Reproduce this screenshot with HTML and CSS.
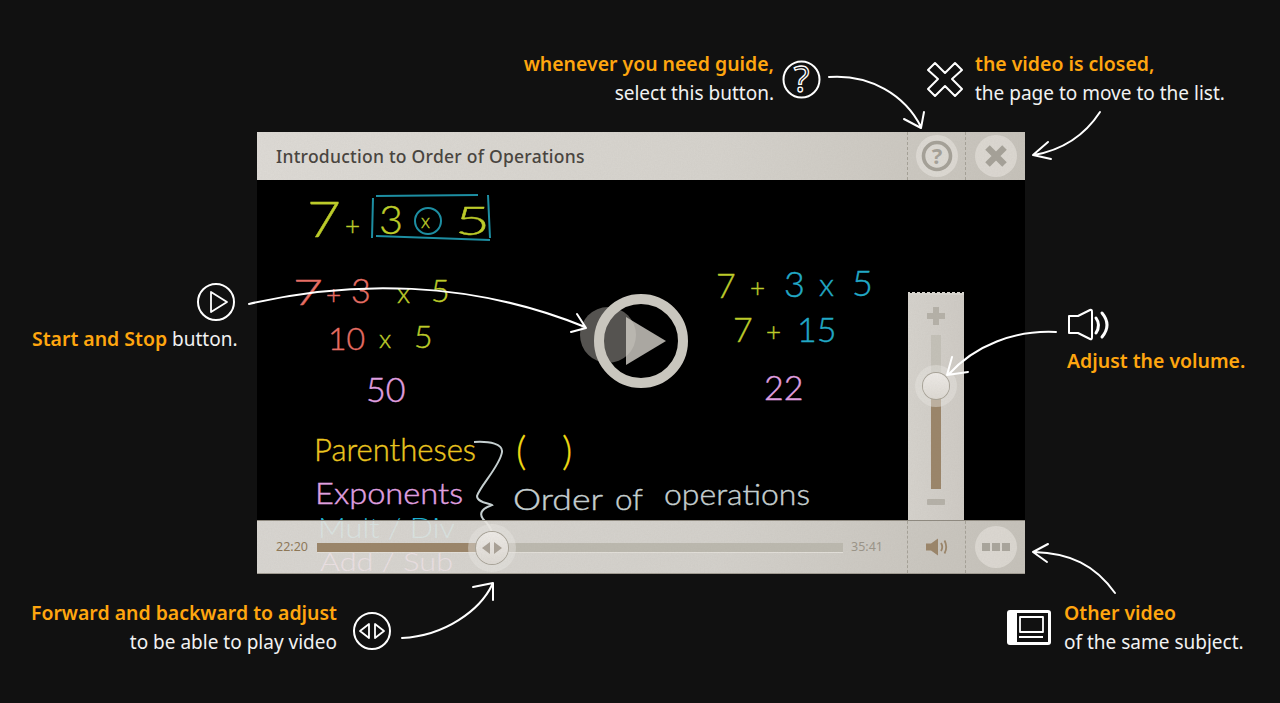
FILE: index.html
```html
<!DOCTYPE html>
<html>
    <head>
        <meta charset="utf-8">
        <title>Video player guide</title>
        <link rel="stylesheet" href="styles.css">
    </head>
    <body>
        <div class="stage">
            <section class="player">
                <header class="titlebar">
                    <h1 class="title">Introduction to Order of Operations</h1>
                    <div class="tool">
                        <span class="round">
                            <svg width="32" height="32" viewBox="0 0 32 32">
                                <circle cx="16" cy="16" r="13.5" fill="none" stroke="#a5a198" stroke-width="3.6"/>
                                <text class="help-mark" x="16" y="24" text-anchor="middle">?</text>
                            </svg>
                        </span>
                    </div>
                    <div class="tool tool-last">
                        <span class="round">
                            <svg width="24" height="24" viewBox="0 0 24 24">
                                <path d="M3.5 3.5 L20.5 20.5 M20.5 3.5 L3.5 20.5" stroke="#a5a198" stroke-width="6.4" fill="none"/>
                            </svg>
                        </span>
                    </div>
                </header>

                <div class="video">
                    <svg class="board" width="768" height="394" viewBox="257 180 768 394">
                        <g class="hand lime">
                            <text x="307" y="237" font-size="50" textLength="34" lengthAdjust="spacingAndGlyphs">7</text>
                            <text x="345" y="235" font-size="26">+</text>
                            <text x="379" y="234" font-size="40" textLength="24" lengthAdjust="spacingAndGlyphs">3</text>
                            <text x="421" y="228" font-size="19">x</text>
                            <text x="455" y="235" font-size="40" textLength="35" lengthAdjust="spacingAndGlyphs">5</text>
                        </g>
                        <g fill="none" stroke="#1d8ea2" stroke-width="2">
                            <path d="M373 198 L372 238 M376 196 L478 195 M488 195 L490 238 M376 236 L490 240"/>
                            <ellipse cx="428" cy="221" rx="13" ry="13"/>
                        </g>

                        <g class="hand salmon">
                            <text x="293" y="305" font-size="36" textLength="30" lengthAdjust="spacingAndGlyphs">7</text>
                            <text x="326" y="304" font-size="26">+</text>
                            <text x="351" y="303" font-size="34">3</text>
                            <text x="328" y="350" font-size="32">10</text>
                        </g>
                        <g class="hand lime">
                            <text x="397" y="303" font-size="28">x</text>
                            <text x="431" y="302" font-size="32">5</text>
                            <text x="379" y="348" font-size="26">x</text>
                            <text x="414" y="348" font-size="32">5</text>
                            <text x="716" y="298" font-size="34">7</text>
                            <text x="750" y="297" font-size="26">+</text>
                            <text x="733" y="342" font-size="34">7</text>
                            <text x="766" y="341" font-size="26">+</text>
                        </g>
                        <g class="hand cyan">
                            <text x="784" y="297" font-size="36">3</text>
                            <text x="819" y="296" font-size="32">x</text>
                            <text x="852" y="296" font-size="36">5</text>
                            <text x="797" y="342" font-size="34">15</text>
                        </g>
                        <g class="hand pink">
                            <text x="366" y="402" font-size="34">50</text>
                            <text x="764" y="400" font-size="34">22</text>
                            <text x="315" y="504" font-size="29" textLength="148" lengthAdjust="spacingAndGlyphs">Exponents</text>
                        </g>
                        <g class="hand gold">
                            <text x="314" y="461" font-size="32" textLength="162" lengthAdjust="spacingAndGlyphs">Parentheses</text>
                        </g>
                        <g class="hand sun">
                            <text x="516" y="465" font-size="40">(</text>
                            <text x="562" y="465" font-size="40">)</text>
                        </g>
                        <g class="hand chalk">
                            <text x="513" y="510" font-size="30" textLength="90" lengthAdjust="spacingAndGlyphs">Order</text>
                            <text x="615" y="510" font-size="30" textLength="28" lengthAdjust="spacingAndGlyphs">of</text>
                            <text x="664" y="505" font-size="30" textLength="146" lengthAdjust="spacingAndGlyphs">operations</text>
                        </g>
                        <path class="brace" d="M474 442 C490 441 503 444 502 452 C500 466 480 486 477 496 C477 503 490 503 492 505 C484 508 478 512 483 519 C490 526 494 532 491 540"/>

                        <text class="hand faded-cyan" x="318" y="538" font-size="28" textLength="137" lengthAdjust="spacingAndGlyphs">Mult / Div</text>
                        <text class="hand faded-pink" x="320" y="571" font-size="26" textLength="133" lengthAdjust="spacingAndGlyphs">Add / Sub</text>
                    </svg>

                    <button class="play-hit"></button>
                    <div class="play">
                        <svg width="40" height="48" viewBox="0 0 40 48"><path d="M0 0 L40 24 L0 48 Z" fill="#cfccc4" fill-opacity="0.82"/></svg>
                    </div>

                    <aside class="volume">
                        <svg class="vol-sign" width="18" height="18" viewBox="0 0 18 18">
                            <path d="M6 0 H12 V6 H18 V12 H12 V18 H6 V12 H0 V6 H6 Z" fill="#b5b1a8"/>
                        </svg>
                        <div class="vol-track">
                            <div class="vol-fill" style="height:67%"></div>
                            <span class="knob" style="bottom:67%"></span>
                        </div>
                        <span class="vol-minus"></span>
                    </aside>

                    <div class="controls">
                        <span class="time">22:20</span>
                        <div class="seek">
                            <div class="seek-fill" style="width:33.3%"></div>
                            <span class="knob seek-knob" style="left:33.3%">
                                <svg width="20" height="12" viewBox="0 0 20 12">
                                    <path d="M8 0 V12 L0 6 Z M12 0 V12 L20 6 Z" fill="#a9a196"/>
                                </svg>
                            </span>
                        </div>
                        <span class="time time-end">35:41</span>
                        <div class="tool">
                            <svg width="22" height="18" viewBox="0 0 22 18">
                                <path d="M0 5.5 H5 L12 0.5 V17.5 L5 12.5 H0 Z" fill="#9a8468"/>
                                <path d="M15 5 Q17.5 9 15 13 M18.5 2.5 Q22 9 18.5 15.5" fill="none" stroke="#9a8468" stroke-width="1.8"/>
                            </svg>
                        </div>
                        <div class="tool tool-last">
                            <span class="round dots"><i></i><i></i><i></i></span>
                        </div>
                    </div>
                </div>
            </section>

            <p class="note note-help"><b>whenever you need guide,</b><br>select this button.</p>
            <p class="note note-close"><b>the video is closed,</b><br>the page to move to the list.</p>
            <p class="note note-play"><b>Start and Stop</b> button.</p>
            <p class="note note-volume"><b>Adjust the volume.</b></p>
            <p class="note note-seek"><b>Forward and backward to adjust</b><br>to be able to play video</p>
            <p class="note note-other"><b>Other video</b><br>of the same subject.</p>

            <svg class="arrows" width="1280" height="703" viewBox="0 0 1280 703">
                <filter id="grain" x="0" y="0" width="1" height="1">
                    <feTurbulence type="fractalNoise" baseFrequency="0.7" numOctaves="2" seed="4"/>
                    <feColorMatrix values="0 0 0 0 0.3  0 0 0 0 0.28  0 0 0 0 0.25  0 0 0 0.1 0"/>
                </filter>
                <!-- paper grain on the bars -->
                <rect x="257" y="132" width="768" height="48" filter="url(#grain)"/>
                <rect x="908" y="295" width="56" height="225" filter="url(#grain)"/>
                <rect x="257" y="520" width="768" height="54" filter="url(#grain)"/>

                <!-- guide icons -->
                <circle cx="801.500" cy="79.500" r="18" class="line"/>
                <text class="outline-mark" x="801.500" y="92" text-anchor="middle">?</text>
                <path class="line" d="M935 63 L945 73 L955 63 L962 70 L952 79 L962 89 L955 96 L945 86 L935 96 L928 89 L938 79 L928 70 Z"/>

                <circle cx="216" cy="302" r="18" class="line"/>
                <path class="line-thin" d="M211 292 L227 302 L211 312 Z"/>

                <circle cx="372" cy="631" r="18" class="line"/>
                <path class="line-thin" d="M369 624 V638 L360 631 Z M375 624 V638 L384 631 Z"/>

                <path class="line" d="M1069 316 H1078 L1090 310 Q1092 309 1092 312 V337 Q1092 340 1090 339 L1078 333 H1069 Z"/>
                <path class="line wave" d="M1096 318 Q1101 325 1096 333 M1102 313 Q1112 325 1102 337"/>

                <rect x="1007" y="610" width="44" height="35" rx="3" fill="#fff"/>
                <rect x="1017" y="613" width="31" height="29" fill="#111"/>
                <path class="line-thin" d="M1020 617 H1043 V632 H1020 Z M1019 637 H1043"/>

                <!-- arrows -->
                <path class="line" d="M829 77 C870 74 905 95 921 127 M904 119 L921 128 L924 112"/>
                <path class="line" d="M1100 112 C1085 135 1062 150 1034 155 M1048 142 L1033 155 L1051 159"/>
                <path class="line" d="M249 304 C350 280 470 280 585 327 M577 314 L586 328 L571 332"/>
                <path class="line" d="M1056 332 C1015 330 975 345 948 375 M952 357 L947 375 L968 372"/>
                <path class="line" d="M402 638 C445 636 480 610 492 585 M473 587 L493 583 L493 600"/>
                <path class="line" d="M1115 593 C1095 565 1070 553 1034 552 M1048 544 L1033 552 L1047 562"/>
            </svg>
        </div>
    </body>
</html>
```
FILE: styles.css
```css
body {
    margin: 0;
    background-color: #111111;
    font-family: "Noto Sans", "Open Sans", sans-serif;
}

.stage {
    position: relative;
    width: 1280px;
    height: 703px;
    overflow: hidden;
    box-sizing: border-box;
    padding: 132px 0 0 257px;
}

.player {
    width: 768px;
}

/* title bar */
.titlebar {
    display: flex;
    align-items: stretch;
    height: 48px;
    background: linear-gradient(100deg, #dedbd6 0%, #d6d3cd 60%, #c6c2ba 100%);
}
.title {
    flex: 1;
    margin: 0;
    padding-left: 19px;
    font-size: 17.500px;
    font-weight: 500;
    line-height: 48px;
    letter-spacing: 0.25px;
    color: #45413b;
}

.tool {
    display: flex;
    align-items: center;
    justify-content: center;
    box-sizing: border-box;
    width: 58px;
    border-left: 1px dashed #a5a197;
}
.tool-last {
    width: 60px;
}
.round {
    display: flex;
    align-items: center;
    justify-content: center;
    width: 42px;
    height: 42px;
    border-radius: 50%;
    background-color: rgba(236, 233, 228, 0.55);
}
.help-mark {
    font-size: 22px;
    font-weight: 700;
    fill: #a5a198;
}

/* video area */
.video {
    position: relative;
    height: 394px;
    background-color: #000;
}
.board {
    display: block;
    overflow: visible;
}
.hand {
    font-family: "Lato", sans-serif;
    font-weight: 300;
    stroke-width: 0.4;
}
.lime { fill: #bccb2a; stroke: #bccb2a; }
.salmon { fill: #e66e64; stroke: #e66e64; }
.cyan { fill: #22a9c6; stroke: #22a9c6; }
.pink { fill: #e0a0e0; stroke: #e0a0e0; }
.gold { fill: #eac51f; stroke: #eac51f; }
.sun { fill: #f0dc14; stroke: #f0dc14; }
.chalk { fill: #c5cfd0; stroke: #c5cfd0; }
.faded-cyan { fill: #1fb0d0; }
.faded-pink { fill: #e890e8; }
.brace {
    fill: none;
    stroke: #c5cfd0;
    stroke-width: 2;
}

.play-hit {
    position: absolute;
    left: 323px;
    top: 127px;
    width: 56px;
    height: 56px;
    padding: 0;
    border: 0;
    border-radius: 50%;
    background-color: #555350;
}
.play {
    position: absolute;
    left: 337px;
    top: 114px;
    display: flex;
    align-items: center;
    justify-content: center;
    box-sizing: border-box;
    width: 94px;
    height: 94px;
    padding-left: 10px;
    border: 10px solid #c9c6be;
    border-radius: 50%;
}

/* volume popup */
.volume {
    position: absolute;
    left: 651px;
    top: 115px;
    display: flex;
    flex-direction: column;
    align-items: center;
    box-sizing: border-box;
    width: 56px;
    height: 225px;
    padding-top: 12px;
    background: linear-gradient(90deg, #d6d3cd, #cfcbc5);
}
.volume::before {
    content: "";
    position: absolute;
    left: 0;
    right: 0;
    top: -3px;
    height: 3px;
    background: linear-gradient(135deg, transparent 50%, #d6d3cd 50%) 0 0 / 5px 3px,
                linear-gradient(225deg, transparent 50%, #d6d3cd 50%) 0 0 / 5px 3px;
}
.vol-track {
    position: relative;
    width: 10px;
    height: 154px;
    margin-top: 10px;
    background-color: #c4c1b8;
}
.vol-fill {
    position: absolute;
    left: 0;
    right: 0;
    bottom: 0;
    background-color: #9a8468;
}
.knob {
    position: absolute;
    left: 50%;
    width: 26px;
    height: 26px;
    border-radius: 50%;
    background: linear-gradient(#efece8, #dedad4);
    box-shadow: 0 0 0 1px #a8a398, 0 0 0 8px rgba(236, 233, 228, 0.45);
    transform: translate(-50%, 50%);
}
.vol-minus {
    width: 18px;
    height: 6px;
    margin-top: 10px;
    border-radius: 1px;
    background-color: #b5b1a8;
}

/* bottom controls */
.controls {
    position: absolute;
    left: 0;
    right: 0;
    bottom: 0;
    display: flex;
    align-items: stretch;
    box-sizing: border-box;
    height: 54px;
    padding-left: 19px;
    border-top: 1px solid #8e897f;
    border-bottom: 1px solid #a09b91;
    background: linear-gradient(100deg, rgba(238, 235, 230, 0.91) 0%, rgba(230, 227, 221, 0.92) 60%, rgba(204, 200, 192, 0.97) 100%);
}
.time {
    width: 41px;
    font-size: 12.500px;
    line-height: 52px;
    color: #8d7655;
}
.time-end {
    width: 56px;
    margin-left: 8px;
    color: #9a9488;
}
.seek {
    position: relative;
    width: 526px;
    height: 9px;
    margin-top: 22px;
    border-bottom: 1px solid #e4e1db;
    background-color: #bcb9af;
}
.seek-fill {
    height: 100%;
    background-color: #9a8468;
}
.seek-knob {
    top: 50%;
    display: flex;
    align-items: center;
    justify-content: center;
    width: 32px;
    height: 32px;
    transform: translate(-50%, -50%);
}
.dots {
    gap: 2px;
}
.dots i {
    width: 8px;
    height: 8px;
    background-color: #a9a59c;
}

/* notes round the player */
.note {
    position: absolute;
    margin: 0;
    font-size: 19px;
    line-height: 29px;
    color: #f2f2f2;
    white-space: nowrap;
}
.note b {
    font-size: 19.450px;
    font-weight: 600;
    color: #ffa60f;
}
.note-help { right: 506px; top: 49px; text-align: right; }
.note-close { left: 975px; top: 49px; }
.note-play { left: 32px; top: 324px; }
.note-volume { left: 1067px; top: 346px; }
.note-seek { right: 943px; top: 598px; text-align: right; }
.note-other { left: 1064px; top: 598px; }

.arrows {
    position: absolute;
    left: 0;
    top: 0;
    pointer-events: none;
}
.line {
    fill: none;
    stroke: #fff;
    stroke-width: 2;
    stroke-linejoin: round;
    stroke-linecap: round;
}
.line-thin {
    fill: none;
    stroke: #fff;
    stroke-width: 1.800;
    stroke-linejoin: round;
}
.wave {
    stroke-width: 3;
}
.outline-mark {
    font-size: 36px;
    font-weight: 400;
    fill: none;
    stroke: #fff;
    stroke-width: 1.300;
}
```
